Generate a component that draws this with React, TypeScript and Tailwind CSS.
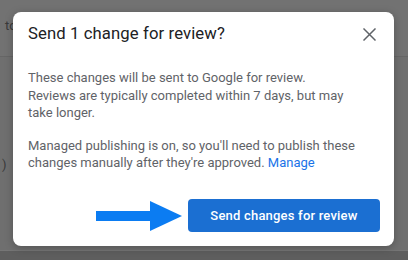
import React from "react";

function CloseIcon() {
  return (
    <svg width="13" height="13" viewBox="0 0 13 13" aria-hidden>
      <path d="M1 1 L12 12 M12 1 L1 12" stroke="#5f6368" strokeWidth="1.5" strokeLinecap="square" />
    </svg>
  );
}

function Arrow() {
  return (
    <svg width="86" height="30" viewBox="0 0 86 30" aria-hidden>
      <rect x="0" y="10" width="56" height="10" fill="#0b7cf2" />
      <polygon points="54,0 86,15 54,30" fill="#0b7cf2" />
    </svg>
  );
}

export default function App() {
  return (
    <div
      className="relative h-[260px] w-[408px] overflow-hidden bg-[#6f6f6f]"
      style={{ fontFamily: "Roboto, 'Noto Sans', Arial, sans-serif" }}
    >
      {/* page behind the scrim */}
      <div className="flex h-full flex-col">
        <div className="flex h-[57px] flex-none items-start border-b border-[#666] bg-[#727272] px-[5px] pt-[16px] text-[13px] text-[#3a3a3a]">
          to
        </div>
        <div className="flex flex-1 flex-col justify-start pl-[2px] pt-[98px] text-[13px] text-[#3a3a3a]">
          <span>)</span>
        </div>
        <div className="h-[10px] flex-none border-t border-[#767676] bg-[#5e5e5e]" />
      </div>

      {/* dialog */}
      <div className="absolute inset-0 pl-[13px] pt-[12px]">
        <div className="flex h-[234px] w-[381px] flex-col rounded-[8px] bg-white shadow-[0_2px_8px_rgba(0,0,0,0.25)]">
          <div className="flex items-center justify-between pl-[15px] pr-[15px] pt-[10px]">
            <h1 className="text-[16.7px] font-normal leading-[24px] tracking-[0.1px] text-[#202124]">
              Send 1 change for review?
            </h1>
            <button type="button" className="flex h-[20px] w-[20px] items-center justify-center">
              <CloseIcon />
            </button>
          </div>
          <div className="flex flex-col gap-[15px] pl-[15px] pr-[35px] pt-[23px] text-[13px] leading-[17.5px] text-[#5f6368]">
            <p>
              These changes will be sent to Google for review.
              <br />
              Reviews are typically completed within 7 days, but may take longer.
            </p>
            <p>
              Managed publishing is on, so you'll need to publish these changes manually after they're approved.{" "}
              <a className="text-[#1a73e8]">Manage</a>
            </p>
          </div>
          <div className="mt-auto flex items-center justify-end gap-[6px] pb-[14px] pr-[14px]">
            <Arrow />
            <button
              type="button"
              className="flex h-[33px] w-[192px] items-center justify-center rounded-[4px] bg-[#1b6fd2] text-[13px] font-medium tracking-[0.2px] text-white"
            >
              Send changes for review
            </button>
          </div>
        </div>
      </div>
    </div>
  );
}
